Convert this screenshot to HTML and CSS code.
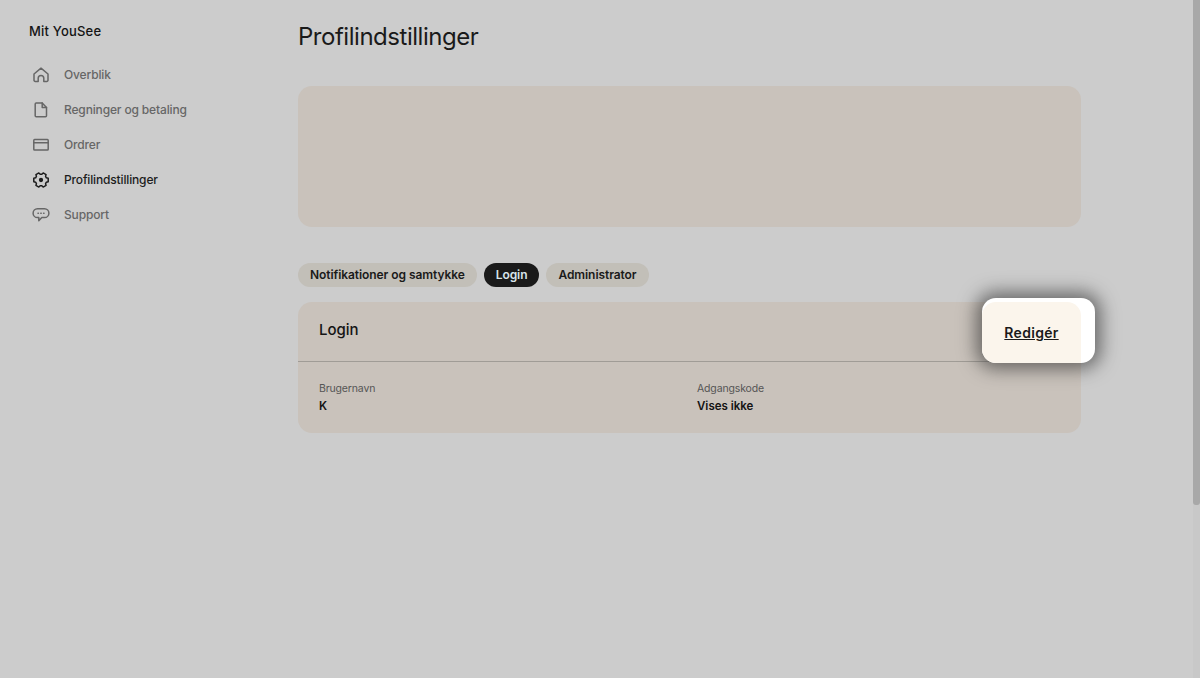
FILE: index.html
```html
<!DOCTYPE html>
<html lang="en">

<head>
    <meta charset="UTF-8" />
    <meta name="viewport" content="width=device-width, initial-scale=1.0" />
    <title>Profilindstillinger</title>
    <link rel="stylesheet" href="styles.css">
</head>

<body>
    <div class="page">
        <aside class="sidebar">
            <div class="brand">Mit YouSee</div>
            <nav class="nav">
                <a class="nav-item">
                    <svg class="nav-icon" viewBox="0 0 18 18"><path d="M2 8 9 2.2 16 8v6.2a1.2 1.2 0 0 1-1.2 1.2h-3v-3.2a2.8 2.8 0 0 0-5.6 0v3.2h-3A1.2 1.2 0 0 1 2 14.2z" /></svg>
                    Overblik
                </a>
                <a class="nav-item">
                    <svg class="nav-icon" viewBox="0 0 18 18"><path d="M4.2 2h6l4.3 4.4v8.4a1 1 0 0 1-1 1H4.2a1 1 0 0 1-1-1V3a1 1 0 0 1 1-1z" /><path d="M10.2 2v4.4h4.3" /></svg>
                    Regninger og betaling
                </a>
                <a class="nav-item">
                    <svg class="nav-icon" viewBox="0 0 18 18"><rect x="1.8" y="3.6" width="14.4" height="10.4" rx="0.8" /><path d="M1.8 6.8h14.4" /></svg>
                    Ordrer
                </a>
                <a class="nav-item active">
                    <svg class="nav-icon" viewBox="0 0 18 18"><path d="M16.21 10.66 14.38 11.17 13.57 12.57 14.05 14.41 11.16 16.07 9.81 14.74H8.19L6.84 16.07 3.95 14.41 4.43 12.57 3.62 11.17 1.79 10.66V7.34L3.62 6.83 4.43 5.43 3.95 3.59 6.84 1.93 8.19 3.26H9.81L11.16 1.93 14.05 3.59 13.57 5.43 14.38 6.83 16.21 7.34z" /><circle cx="9" cy="9" r="1.4" fill="currentColor" /></svg>
                    Profilindstillinger
                </a>
                <a class="nav-item">
                    <svg class="nav-icon" viewBox="0 0 18 18"><path d="M5.5 2.8h7a4.4 4.4 0 0 1 0 8.8H9.8l-3 3.2v-3.2H5.5a4.4 4.4 0 0 1 0-8.8z" /><path d="M6 7.2h.4M8.8 7.2h.4M11.6 7.2h.4" /></svg>
                    Support
                </a>
            </nav>
        </aside>

        <main class="main">
            <h1>Profilindstillinger</h1>
            <div class="banner"></div>

            <div class="tabs">
                <span class="tab">Notifikationer og samtykke</span>
                <span class="tab selected">Login</span>
                <span class="tab">Administrator</span>
            </div>

            <section class="card">
                <div class="card-head">
                    <h2>Login</h2>
                    <div class="spot">
                        <div class="spot-fill"><a class="edit">Redigér</a></div>
                    </div>
                </div>
                <div class="card-body">
                    <div>
                        <div class="label">Brugernavn</div>
                        <div class="value">K</div>
                    </div>
                    <div>
                        <div class="label">Adgangskode</div>
                        <div class="value">Vises ikke</div>
                    </div>
                </div>
            </section>
        </main>

        <div class="scrollbar"><div class="thumb"></div></div>
    </div>
</body>

</html>
```

FILE: styles.css
```css
* {
    box-sizing: border-box;
}

html,
body {
    margin: 0;
    height: 678px;
    overflow: hidden;
}

body {
    font-family: Inter, "Noto Sans", sans-serif;
    background: #cccccc;
    color: #141414;
}

.page {
    position: relative;
    display: flex;
    height: 678px;
}

.sidebar {
    width: 298px;
    padding: 23px 0 0 29px;
}

.brand {
    font-size: 13px;
    font-weight: 500;
    line-height: 17px;
    letter-spacing: 0.2px;
}

.nav {
    margin-top: 17px;
}

.nav-item {
    display: flex;
    align-items: center;
    gap: 14px;
    height: 35px;
    padding-left: 3px;
    font-size: 12px;
    font-weight: 500;
    letter-spacing: -0.15px;
    color: #666666;
}

.nav-item.active {
    color: #1c1c1c;
}

.nav-icon {
    width: 18px;
    height: 18px;
    fill: none;
    stroke: currentColor;
    stroke-width: 1.5;
    stroke-linejoin: round;
    stroke-linecap: round;
}

.main {
    width: 783px;
}

h1 {
    margin: 20px 0 0;
    font-size: 24px;
    font-weight: 400;
    line-height: 34px;
    letter-spacing: -0.47px;
    color: #1a1a1a;
}

.banner {
    height: 141px;
    margin-top: 32px;
    background: #c9c2bb;
    border-radius: 14px;
}

.tabs {
    display: flex;
    gap: 7px;
    margin-top: 36px;
}

.tab {
    height: 24px;
    padding: 0 12px;
    font-size: 12px;
    font-weight: 600;
    line-height: 24px;
    letter-spacing: -0.07px;
    background: #c2bfb8;
    border-radius: 12px;
    color: #1a1a1a;
}

.tab.selected {
    background: #1a1a1a;
    color: #d8e4ea;
}

.card {
    margin-top: 15px;
    background: #c9c2bb;
    border-radius: 14px;
}

.card-head {
    position: relative;
    height: 60px;
    padding: 18px 21px 0;
    border-bottom: 1px solid #a09c96;
}

h2 {
    margin: 0;
    font-size: 15px;
    font-weight: 500;
    line-height: 20px;
}

/* highlighted spot, sits over the card */
.spot {
    position: absolute;
    top: -4px;
    right: -14px;
    width: 113px;
    height: 65px;
    background: #ffffff;
    border-radius: 14px;
    box-shadow: 0 0 18px 6px rgba(40, 40, 40, 0.6);
}

.spot-fill {
    display: flex;
    align-items: center;
    justify-content: center;
    width: 99px;
    height: 61px;
    margin-top: 4px;
    padding: 0 0 1px 0;
    background: #fbf5ec;
    border-radius: 14px 14px 0 14px;
}

.edit {
    font-size: 14px;
    font-weight: 600;
    letter-spacing: 0.3px;
    text-decoration: underline;
    color: #1a1a1a;
}

.card-body {
    display: grid;
    grid-template-columns: 378px 1fr;
    height: 71px;
    padding: 20px 21px 0;
}

.label {
    font-size: 10.5px;
    line-height: 14px;
    letter-spacing: -0.15px;
    color: #555555;
}

.value {
    margin-top: 2px;
    font-size: 11.5px;
    font-weight: 600;
    line-height: 16px;
    color: #141414;
}

.scrollbar {
    position: absolute;
    top: 0;
    right: 0;
    width: 7px;
    height: 678px;
    background: #c8c8c8;
}

.thumb {
    height: 505px;
    background: #a8a8a8;
    border-radius: 0 0 3px 3px;
}
```
